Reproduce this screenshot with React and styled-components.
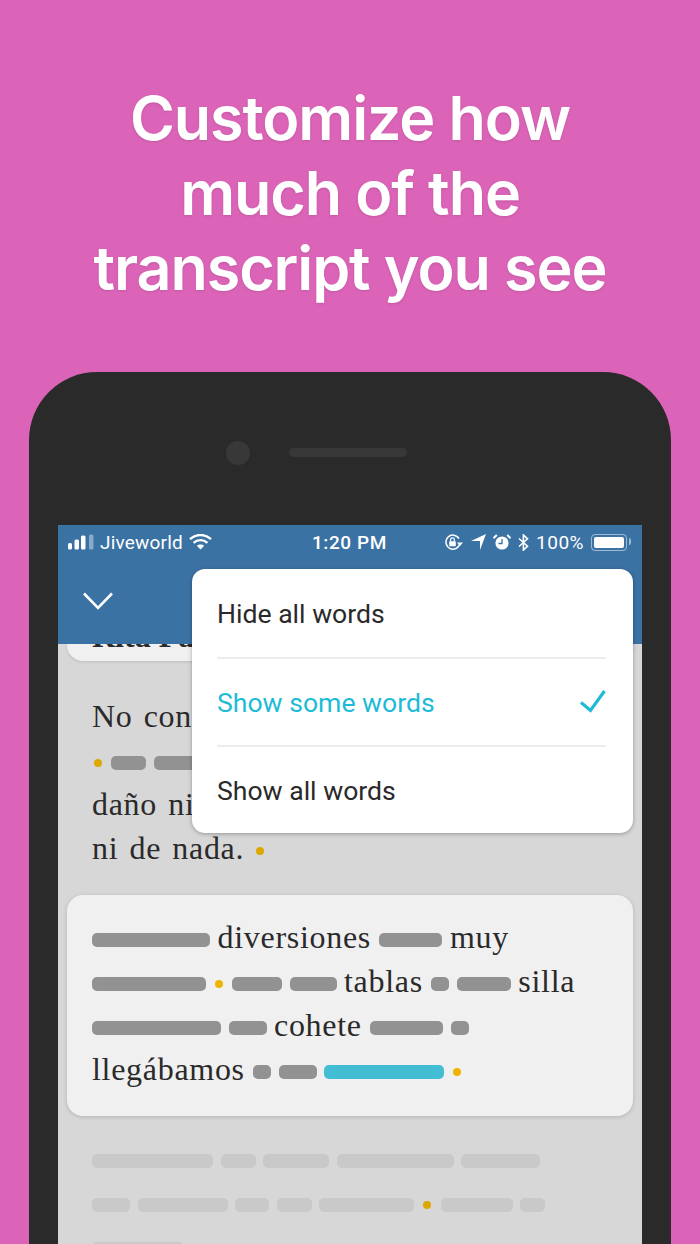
import React from "react";
import styled, { createGlobalStyle } from "styled-components";

const Global = createGlobalStyle`
  html, body { margin: 0; padding: 0; background: #dc64b8; }
  * { box-sizing: border-box; }
`;

const Page = styled.div`
  width: 700px;
  height: 1244px;
  overflow: hidden;
  background: #dc64b8;
  display: flex;
  flex-direction: column;
`;

const Heading = styled.h1`
  margin: 0;
  height: 372px;
  padding-top: 81px;
  text-align: center;
  color: #fff;
  font-family: Inter, "Liberation Sans", sans-serif;
  font-weight: 600;
  font-size: 61px;
  line-height: 75px;
  letter-spacing: -1.1px;
  text-shadow: 0 1px 3px rgba(0, 0, 0, 0.12);
`;

const Phone = styled.div`
  flex: 1;
  margin: 0 29px;
  padding: 0 29px;
  background: #2a2a2a;
  border-radius: 68px 68px 0 0;
  display: flex;
  flex-direction: column;
  min-height: 0;
`;

const SensorRow = styled.div`
  height: 153px;
  flex: none;
  padding: 69px 0 0 168px;
  display: flex;
  align-items: flex-start;
  gap: 39px;
`;

const Camera = styled.div`
  width: 24px;
  height: 24px;
  border-radius: 50%;
  background: #383838;
`;

const Speaker = styled.div`
  width: 118px;
  height: 9px;
  margin-top: 7px;
  border-radius: 5px;
  background: #383838;
`;

const Screen = styled.div`
  position: relative;
  flex: 1;
  min-height: 0;
  overflow: hidden;
  background: #d7d7d7;
`;

const Header = styled.header`
  position: relative;
  z-index: 1;
  height: 119px;
  background: #3b72a4;
  color: #fff;
`;

const StatusBar = styled.div`
  height: 44px;
  padding: 0 10px 10px;
  display: grid;
  grid-template-columns: 1fr auto 1fr;
  align-items: center;
  font-family: Roboto, "Liberation Sans", sans-serif;
  font-size: 19px;
  letter-spacing: 0.2px;
`;

const StatusLeft = styled.div`
  display: flex;
  align-items: center;
  gap: 6px;
`;

const StatusRight = styled.div`
  display: flex;
  align-items: center;
  justify-content: flex-end;
  gap: 7px;
`;

const Percent = styled.span`
  letter-spacing: 0.5px;
`;

const Time = styled.div`
  font-weight: 500;
  letter-spacing: 0.6px;
  margin-left: -1px;
`;

const Battery = styled.div`
  position: relative;
  width: 36px;
  height: 17px;
  margin-right: 5px;
  padding: 2px;
  border: 1.5px solid rgba(255, 255, 255, 0.5);
  border-radius: 4px;

  &::before {
    content: "";
    display: block;
    height: 100%;
    background: #fff;
    border-radius: 2px;
  }

  &::after {
    content: "";
    position: absolute;
    right: -5px;
    top: 3px;
    width: 2.5px;
    height: 7px;
    border-radius: 0 2px 2px 0;
    background: rgba(255, 255, 255, 0.5);
  }
`;

const NavBar = styled.nav`
  height: 75px;
  padding: 23px 0 0 25px;
`;

const Content = styled.main`
  display: flex;
  flex-direction: column;
`;

const CutCard = styled.div`
  height: 17px;
  margin: 0 9px;
  padding: 0 25px;
  background: #f0f0f0;
  border-radius: 0 0 16px 16px;
  overflow: hidden;
  font-family: "Liberation Serif", serif;
  font-size: 32px;
  font-weight: 700;
  line-height: 10px;
  color: #2a2a2a;
  white-space: nowrap;
  box-shadow: 0 1px 3px rgba(0, 0, 0, 0.12);
`;

const CutText = styled.div`
  margin-top: -13px;
`;

const Passage = styled.section`
  padding: 36px 34px 22px;
`;

const Card = styled.section`
  margin: 0 9px;
  padding: 23px 25px 22px;
  background: #f0f0f0;
  border-radius: 16px;
  box-shadow: 0 1px 4px rgba(0, 0, 0, 0.16);
`;

const Faded = styled.section`
  padding: 23px 34px 0;
`;

const Line = styled.div`
  height: 44px;
  display: flex;
  align-items: center;
  gap: 7.5px;
  white-space: nowrap;
  font-family: "Liberation Serif", serif;
  font-size: 32px;
  letter-spacing: 0.7px;
  word-spacing: 2.5px;
  color: #2a2a2a;
`;

const Word = styled.span`
  line-height: 44px;
  margin-top: -7px;
  padding-right: 1px;
`;

const Bar = styled.span`
  flex: none;
  width: ${(p) => p.$w}px;
  height: 14.5px;
  border-radius: 5px;
  background: ${(p) =>
    p.$tone === "active" ? "#42bdd3" : p.$tone === "faded" ? "#c9c9c9" : "#929292"};
`;

const Dot = styled.span`
  flex: none;
  width: 8px;
  height: 8px;
  margin: ${(p) => p.$margin || "0 1.5px"};
  border-radius: 50%;
  background: ${(p) => (p.$bright ? "#f0b400" : "#dca800")};
`;

const Menu = styled.div`
  position: absolute;
  z-index: 2;
  top: 44px;
  left: 134px;
  width: 441px;
  height: 264px;
  padding: 0 27px 0 25px;
  background: #fff;
  border-radius: 13px;
  box-shadow: 0 1px 4px rgba(0, 0, 0, 0.3);
  font-family: Roboto, "Liberation Sans", sans-serif;
  font-size: 26.6px;
`;

const MenuItem = styled.div`
  height: 88px;
  display: flex;
  align-items: center;
  justify-content: space-between;
  color: ${(p) => (p.$active ? "#1ebbd7" : "#2a2a2a")};

  & + & {
    border-top: 2px solid #ececec;
  }
`;

const Signal = () => (
  <svg width="26" height="16" viewBox="0 0 26 16" fill="#fff">
    <rect x="0" y="9" width="4" height="6.5" rx="1.5" />
    <rect x="6.5" y="5.5" width="4.5" height="10" rx="1.5" />
    <rect x="13" y="1.5" width="4.5" height="14" rx="1.5" />
    <rect x="21" y="0.5" width="4.5" height="15" rx="1.5" opacity="0.4" />
  </svg>
);

const Wifi = () => (
  <svg width="23" height="16" viewBox="0 0 23 16" fill="none" stroke="#fff" strokeWidth="2.4">
    <path d="M1 5.2C7 -0.4 16 -0.4 22 5.2" />
    <path d="M4.6 8.8C8.6 5.2 14.4 5.2 18.4 8.8" />
    <path d="M11.5 15.6L7.8 11.8C9.8 10.1 13.2 10.1 15.2 11.8Z" fill="#fff" stroke="none" />
  </svg>
);

const RotationLock = () => (
  <svg width="20" height="17" viewBox="0 0 20 17" fill="none" stroke="#fff">
    <path d="M15.8 9.6A7 7 0 1 1 15 4.6" strokeWidth="1.5" />
    <path d="M13 8.5H19L16 12Z" fill="#fff" stroke="none" />
    <rect x="5.2" y="7.2" width="6.6" height="5" rx="0.8" fill="#fff" stroke="none" />
    <path d="M6.6 7.4V5.8A1.9 1.9 0 0 1 10.4 5.8V7.4" strokeWidth="1.2" />
  </svg>
);

const Location = () => (
  <svg width="15" height="16" viewBox="0 0 15 16" fill="#fff">
    <path d="M15 0L9 16V7H0Z" />
  </svg>
);

const Alarm = () => (
  <svg width="18" height="16" viewBox="0 0 18 16" fill="#fff">
    <circle cx="9" cy="9" r="6.6" />
    <path d="M9 5V9.5H5.5" fill="none" stroke="#3b72a4" strokeWidth="1.3" />
    <path d="M0.5 4.2L3.8 1M17.5 4.2L14.2 1" stroke="#fff" strokeWidth="2" fill="none" />
  </svg>
);

const Bluetooth = () => (
  <svg width="11" height="17" viewBox="0 0 11 17" fill="none" stroke="#fff" strokeWidth="1.6">
    <path d="M1 4.5L9.5 12.2L5.4 16V1L9.5 4.8L1 12.5" />
  </svg>
);

const Chevron = () => (
  <svg width="30" height="18" viewBox="0 0 30 18" fill="none" stroke="#fff" strokeWidth="2.6">
    <path d="M1 1.5L15 16L29 1.5" />
  </svg>
);

const Check = () => (
  <svg width="26" height="24" viewBox="0 0 26 24" fill="none" stroke="#1ebbd7" strokeWidth="3.2">
    <path d="M1 12.5L10.5 20.5L24.5 1" />
  </svg>
);

const fadedLines = [
  [121, 35, 66, 117, 79],
  [38, 90, 34, 35, 95, "dot", 72, 25],
  [92],
];

export default function App() {
  return (
    <Page>
      <Global />
      <Heading>
        Customize how
        <br />
        much of the
        <br />
        transcript you see
      </Heading>
      <Phone>
        <SensorRow>
          <Camera />
          <Speaker />
        </SensorRow>
        <Screen>
          <Header>
            <StatusBar>
              <StatusLeft>
                <Signal />
                <span>Jiveworld</span>
                <Wifi />
              </StatusLeft>
              <Time>1:20 PM</Time>
              <StatusRight>
                <RotationLock />
                <Location />
                <Alarm />
                <Bluetooth />
                <Percent>100%</Percent>
                <Battery />
              </StatusRight>
            </StatusBar>
            <NavBar>
              <Chevron />
            </NavBar>
          </Header>
          <Content>
            <CutCard>
              <CutText>Rita Pacheco</CutText>
            </CutCard>
            <Passage>
              <Line>
                <Word>No conocía</Word>
              </Line>
              <Line>
                <Dot $margin="0 2px 0 1.5px" />
                <Bar $w={35} />
                <Bar $w={60} />
              </Line>
              <Line>
                <Word>daño ni</Word>
              </Line>
              <Line>
                <Word>ni de nada.</Word>
                <Dot $margin="0 0 0 3.5px" />
              </Line>
            </Passage>
            <Card>
              <Line>
                <Bar $w={118} />
                <Word>diversiones</Word>
                <Bar $w={63} />
                <Word>muy</Word>
              </Line>
              <Line>
                <Bar $w={114} />
                <Dot $bright />
                <Bar $w={50} />
                <Bar $w={47} />
                <Word>tablas</Word>
                <Bar $w={18} />
                <Bar $w={54} />
                <Word>silla</Word>
              </Line>
              <Line>
                <Bar $w={129} />
                <Bar $w={38} />
                <Word>cohete</Word>
                <Bar $w={73} />
                <Bar $w={18} />
              </Line>
              <Line>
                <Word>llegábamos</Word>
                <Bar $w={18} />
                <Bar $w={38} />
                <Bar $w={120} $tone="active" />
                <Dot $bright $margin="0 0 0 1.5px" />
              </Line>
            </Card>
            <Faded>
              {fadedLines.map((line, i) => (
                <Line key={i}>
                  {line.map((w, j) =>
                    w === "dot" ? <Dot key={j} $margin="0 1.75px" /> : <Bar key={j} $w={w} $tone="faded" />
                  )}
                </Line>
              ))}
            </Faded>
          </Content>
          <Menu>
            <MenuItem>Hide all words</MenuItem>
            <MenuItem $active>
              Show some words
              <Check />
            </MenuItem>
            <MenuItem>Show all words</MenuItem>
          </Menu>
        </Screen>
      </Phone>
    </Page>
  );
}
